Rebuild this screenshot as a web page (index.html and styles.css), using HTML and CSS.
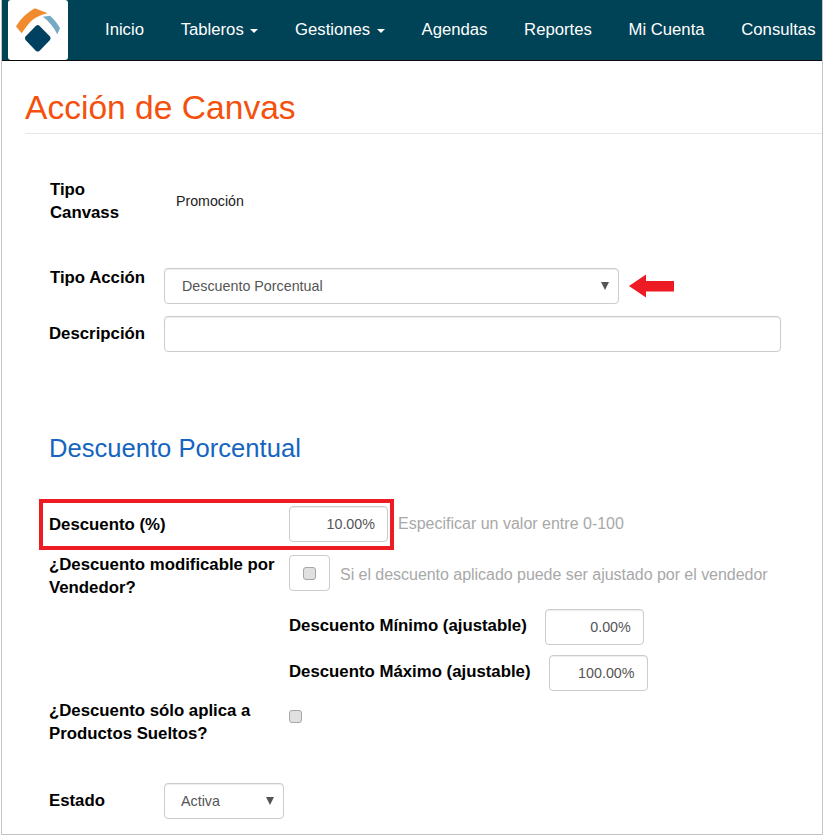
FILE: index.html
```html
<!DOCTYPE html>
<html lang="es">
<head>
<meta charset="utf-8">
<title>Acción de Canvas</title>
<link rel="stylesheet" href="styles.css">
</head>
<body>
<div class="frame">
  <nav class="nav">
    <a class="logo" href="#">
      <svg width="60" height="60" viewBox="0 0 60 60">
        <path class="logo-orange" d="M8 26.500 C13 18 20 12 27 8.300 L39.700 13.300 C34 14.500 29 16.500 25 19.500 C20.500 23.500 17 28 13.700 33.300 Z"/>
        <path class="logo-blue" d="M34.700 16.700 L42 15.700 C46 19 49.500 23.500 52 28.300 L49.300 34.300 C45.500 27 41 21 34.700 16.700 Z"/>
        <path class="logo-navy" d="M28 25.700 Q29.700 24.400 31.400 25.700 L42 36.600 Q43.200 38.300 42 40 L31.400 50.900 Q29.700 52.300 28 50.900 L17.500 40 Q16.200 38.300 17.500 36.600 Z"/>
      </svg>
    </a>
    <ul class="menu">
      <li>Inicio</li>
      <li>Tableros <span class="caret"></span></li>
      <li>Gestiones <span class="caret"></span></li>
      <li>Agendas</li>
      <li>Reportes</li>
      <li>Mi Cuenta</li>
      <li>Consultas</li>
    </ul>
  </nav>
  <main class="main">
    <h1 class="title">Acción de Canvas</h1>
    <form class="form">
      <div class="row row-tipo">
        <div class="label label-inset">Tipo Canvass</div>
        <div class="static">Promoción</div>
      </div>
      <div class="row row-accion">
        <div class="label label-inset label-top">Tipo Acción</div>
        <div class="with-arrow">
          <div class="select-wrap select-wide">
            <select class="control select"><option>Descuento Porcentual</option></select>
          </div>
          <svg class="arrow" width="46" height="24" viewBox="0 0 46 24"><path d="M0 12 L17 0.500 V7 H45 V17.500 H17 V23.500 Z"/></svg>
        </div>
      </div>
      <div class="row row-desc">
        <div class="label label-mid">Descripción</div>
        <input class="control input-full" type="text">
      </div>
      <h2 class="section">Descuento Porcentual</h2>
      <div class="wide-row row-pct">
        <div class="label label-mid">Descuento (%)</div>
        <div class="inline">
          <input class="control num" type="text" value="10.00%">
          <span class="help help-pct">Especificar un valor entre 0-100</span>
        </div>
        <div class="highlight"></div>
      </div>
      <div class="wide-row row-mod">
        <div class="label">¿Descuento modificable por Vendedor?</div>
        <div class="inline">
          <div class="check-box"><input class="check" type="checkbox"></div>
          <span class="help help-mod">Si el descuento aplicado puede ser ajustado por el vendedor</span>
        </div>
      </div>
      <div class="sub-rows">
        <div class="sub-row"><span class="label sub-label">Descuento Mínimo (ajustable)</span><input class="control num" type="text" value="0.00%"></div>
        <div class="sub-row"><span class="label sub-label">Descuento Máximo (ajustable)</span><input class="control num" type="text" value="100.00%"></div>
      </div>
      <div class="wide-row row-sueltos">
        <div class="label">¿Descuento sólo aplica a Productos Sueltos?</div>
        <div><input class="check check-plain" type="checkbox"></div>
      </div>
      <div class="row row-estado">
        <div class="label label-mid">Estado</div>
        <div class="select-wrap select-small">
          <select class="control select"><option>Activa</option></select>
        </div>
      </div>
    </form>
  </main>
</div>
</body>
</html>
```
FILE: styles.css
```css
* { box-sizing: border-box; }
html, body { margin: 0; padding: 0; background: #fff; }
body { font-family: "Liberation Sans", Arial, sans-serif; color: #000; }

.frame {
  width: 822px;
  height: 835px;
  margin-left: 1px;
  border-left: 1px solid #c4c4c4;
  border-right: 1px solid #c4c4c4;
  border-bottom: 1px solid #c4c4c4;
  overflow: hidden;
}

.nav {
  display: flex;
  align-items: center;
  height: 61px;
  background: #004256;
  border-bottom: 1px solid #0a0a0a;
  padding-left: 6px;
}
.logo {
  display: block;
  width: 60px;
  height: 60px;
  background: #fff;
  border-radius: 3px;
  flex: none;
}
.logo svg { display: block; }
.logo-orange { fill: #f28b2e; }
.logo-blue { fill: #75a9c6; }
.logo-navy { fill: #004060; }

.menu {
  display: flex;
  gap: 36.7px;
  list-style: none;
  margin: 0 0 0 37px;
  padding: 0;
  color: #fff;
  font-size: 16.7px;
  white-space: nowrap;
}
.caret {
  display: inline-block;
  margin-left: 2px;
  vertical-align: middle;
  border-top: 4px solid #fff;
  border-left: 4.5px solid transparent;
  border-right: 4.5px solid transparent;
}

.main { padding-left: 23px; }
.title {
  height: 73px;
  margin: 0;
  padding-top: 26px;
  border-bottom: 1px solid #e6e6e6;
  font-size: 33.6px;
  line-height: 42px;
  font-weight: 400;
  color: #f4500e;
}
.form { padding-left: 24px; }

.label {
  font-size: 16.8px;
  line-height: 23px;
  font-weight: 700;
  color: #000;
}
.label-inset { padding-left: 1px; }
.label-top { margin-top: -2px; }
.label-mid { align-self: center; }

.row {
  display: grid;
  grid-template-columns: 115px 1fr;
}
.row-tipo { margin-top: 44px; align-items: center; }
.row-tipo .label { width: 100px; }
.row-accion { margin-top: 44px; height: 36px; }
.row-desc { margin-top: 12px; }
.row-desc .label { margin-top: -2px; }
.row-estado { margin-top: 38px; }
.row-estado .label { margin-top: -1px; }

.static { font-size: 14.2px; line-height: 20px; color: #222; padding-left: 12px; }

.control {
  display: block;
  height: 36px;
  border: 1px solid #ccc;
  border-radius: 4px;
  background: #fff;
  box-shadow: inset 0 1px 1px rgba(0, 0, 0, .075);
  font-family: "Liberation Sans", Arial, sans-serif;
  font-size: 14.3px;
  color: #555;
  outline: none;
}
.input-full { width: 617px; }
.num { width: 99px; padding: 0 12px; text-align: right; }

.with-arrow { display: flex; align-items: center; gap: 10px; }
.select-wrap { position: relative; }
.select-wrap::after {
  content: "";
  position: absolute;
  top: 14px;
  right: 10px;
  border-top: 8px solid #555;
  border-left: 4px solid transparent;
  border-right: 4px solid transparent;
}
.select-wide { width: 455px; }
.select-small { width: 120px; }
.select {
  width: 100%;
  padding: 0 16px;
  appearance: none;
  -webkit-appearance: none;
}
.select-wide .select { padding-left: 17px; }
.arrow { fill: #ed1c24; flex: none; }

.section {
  margin: 77px 0 0;
  height: 38px;
  font-size: 25.6px;
  line-height: 38px;
  font-weight: 400;
  color: #1565c0;
}

.wide-row {
  position: relative;
  display: grid;
  grid-template-columns: 240px 1fr;
}
.row-pct { margin-top: 39px; height: 36px; }
.row-mod { margin-top: 11px; }
.row-sueltos { margin-top: 8px; }
.inline { display: flex; align-items: center; }
.help { font-size: 16px; line-height: 20px; color: #a8a8a8; }
.help-pct { margin-left: 10px; }
.help-mod { margin-left: 10px; margin-top: 4px; letter-spacing: -0.035px; }
.row-mod .inline { height: 36px; margin-top: 2px; }

.highlight {
  position: absolute;
  top: -7px;
  left: -10px;
  width: 355px;
  height: 51px;
  border: 4px solid #ed1c24;
  pointer-events: none;
}

.check-box {
  display: flex;
  align-items: center;
  justify-content: center;
  width: 41px;
  height: 36px;
  border: 1px solid #ccc;
  border-radius: 4px;
}
.check {
  appearance: none;
  -webkit-appearance: none;
  display: block;
  width: 13px;
  height: 13px;
  margin: 0;
  background: #e0e0e0;
  border: 1px solid #a6a6a6;
  border-radius: 3px;
}
.check-plain { margin-top: 11px; }

.sub-rows {
  display: flex;
  flex-direction: column;
  gap: 10px;
  margin-top: 10px;
  padding-left: 240px;
}
.sub-row { display: flex; align-items: center; gap: 18px; }
.sub-label { margin-top: -3px; }
```
